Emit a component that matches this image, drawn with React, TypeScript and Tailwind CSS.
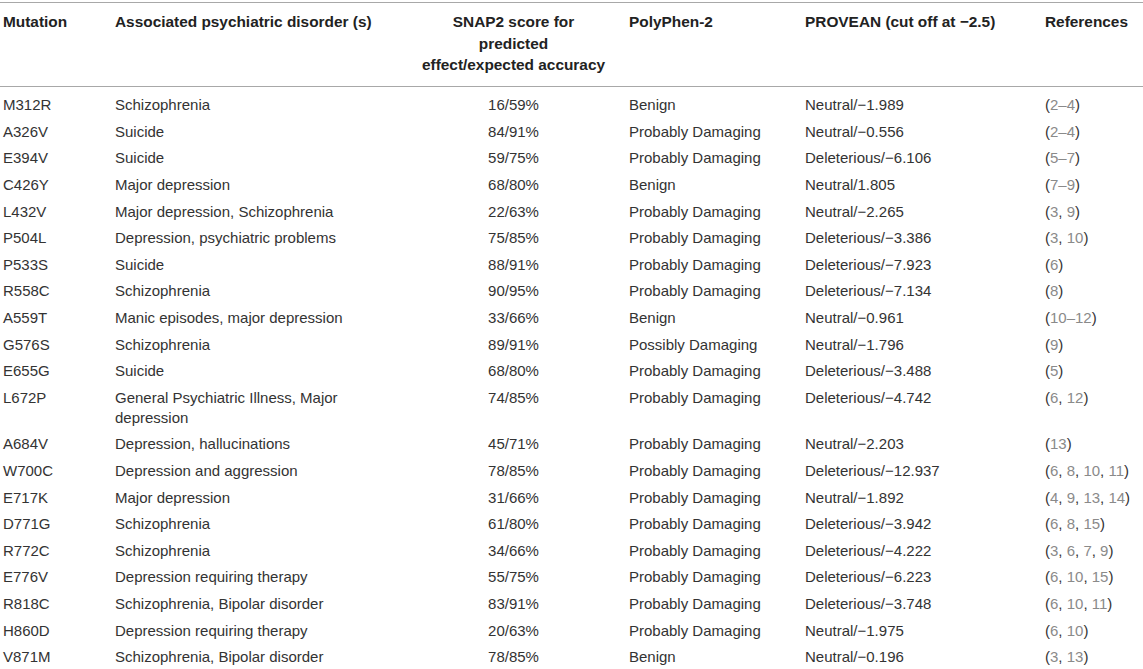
import React from 'react'

type Row = {
  mut: string
  disorder: string
  snap: string
  poly: string
  provean: string
  refs: string[]
}

const rows: Row[] = [
  { mut: 'M312R', disorder: 'Schizophrenia', snap: '16/59%', poly: 'Benign', provean: 'Neutral/−1.989', refs: ['2–4'] },
  { mut: 'A326V', disorder: 'Suicide', snap: '84/91%', poly: 'Probably Damaging', provean: 'Neutral/−0.556', refs: ['2–4'] },
  { mut: 'E394V', disorder: 'Suicide', snap: '59/75%', poly: 'Probably Damaging', provean: 'Deleterious/−6.106', refs: ['5–7'] },
  { mut: 'C426Y', disorder: 'Major depression', snap: '68/80%', poly: 'Benign', provean: 'Neutral/1.805', refs: ['7–9'] },
  { mut: 'L432V', disorder: 'Major depression, Schizophrenia', snap: '22/63%', poly: 'Probably Damaging', provean: 'Neutral/−2.265', refs: ['3', '9'] },
  { mut: 'P504L', disorder: 'Depression, psychiatric problems', snap: '75/85%', poly: 'Probably Damaging', provean: 'Deleterious/−3.386', refs: ['3', '10'] },
  { mut: 'P533S', disorder: 'Suicide', snap: '88/91%', poly: 'Probably Damaging', provean: 'Deleterious/−7.923', refs: ['6'] },
  { mut: 'R558C', disorder: 'Schizophrenia', snap: '90/95%', poly: 'Probably Damaging', provean: 'Deleterious/−7.134', refs: ['8'] },
  { mut: 'A559T', disorder: 'Manic episodes, major depression', snap: '33/66%', poly: 'Benign', provean: 'Neutral/−0.961', refs: ['10–12'] },
  { mut: 'G576S', disorder: 'Schizophrenia', snap: '89/91%', poly: 'Possibly Damaging', provean: 'Neutral/−1.796', refs: ['9'] },
  { mut: 'E655G', disorder: 'Suicide', snap: '68/80%', poly: 'Probably Damaging', provean: 'Deleterious/−3.488', refs: ['5'] },
  { mut: 'L672P', disorder: 'General Psychiatric Illness, Major depression', snap: '74/85%', poly: 'Probably Damaging', provean: 'Deleterious/−4.742', refs: ['6', '12'] },
  { mut: 'A684V', disorder: 'Depression, hallucinations', snap: '45/71%', poly: 'Probably Damaging', provean: 'Neutral/−2.203', refs: ['13'] },
  { mut: 'W700C', disorder: 'Depression and aggression', snap: '78/85%', poly: 'Probably Damaging', provean: 'Deleterious/−12.937', refs: ['6', '8', '10', '11'] },
  { mut: 'E717K', disorder: 'Major depression', snap: '31/66%', poly: 'Probably Damaging', provean: 'Neutral/−1.892', refs: ['4', '9', '13', '14'] },
  { mut: 'D771G', disorder: 'Schizophrenia', snap: '61/80%', poly: 'Probably Damaging', provean: 'Deleterious/−3.942', refs: ['6', '8', '15'] },
  { mut: 'R772C', disorder: 'Schizophrenia', snap: '34/66%', poly: 'Probably Damaging', provean: 'Deleterious/−4.222', refs: ['3', '6', '7', '9'] },
  { mut: 'E776V', disorder: 'Depression requiring therapy', snap: '55/75%', poly: 'Probably Damaging', provean: 'Deleterious/−6.223', refs: ['6', '10', '15'] },
  { mut: 'R818C', disorder: 'Schizophrenia, Bipolar disorder', snap: '83/91%', poly: 'Probably Damaging', provean: 'Deleterious/−3.748', refs: ['6', '10', '11'] },
  { mut: 'H860D', disorder: 'Depression requiring therapy', snap: '20/63%', poly: 'Probably Damaging', provean: 'Neutral/−1.975', refs: ['6', '10'] },
  { mut: 'V871M', disorder: 'Schizophrenia, Bipolar disorder', snap: '78/85%', poly: 'Benign', provean: 'Neutral/−0.196', refs: ['3', '13'] },
]

function Refs({ refs }: { refs: string[] }) {
  return (
    <>
      (
      {refs.map((r, i) => (
        <React.Fragment key={i}>
          {i > 0 && ', '}
          <span className="text-[#8a8a8a]">{r}</span>
        </React.Fragment>
      ))}
      )
    </>
  )
}

export default function App() {
  const th = 'font-bold text-[15.4px] text-[#222] align-top pt-[8px] pb-[10px] leading-[21.5px]'
  const td = 'align-top py-[3.3px] leading-[20px]'

  return (
    <div className="bg-white w-[1143px] h-[669px] overflow-hidden pt-[2px]" style={{ fontFamily: '"Liberation Sans", Arial, sans-serif' }}>
      <table className="table-fixed border-collapse w-[1143px] text-[15px] text-[#333]">
        <colgroup>
          <col className="w-[112px]" />
          <col className="w-[289px]" />
          <col className="w-[225px]" />
          <col className="w-[176px]" />
          <col className="w-[240px]" />
          <col className="w-[101px]" />
        </colgroup>
        <thead>
          <tr className="border-t border-b border-[#a8a8a8]">
            <th className={`${th} text-left pl-[3px]`}>Mutation</th>
            <th className={`${th} text-left pl-[3px] whitespace-nowrap`}>Associated psychiatric disorder (s)</th>
            <th className={`${th} text-center`}>
              SNAP2 score for
              <br />
              predicted
              <br />
              effect/expected accuracy
            </th>
            <th className={`${th} text-left pl-[3px]`}>PolyPhen-2</th>
            <th className={`${th} text-left pl-[3px]`}>PROVEAN (cut off at −2.5)</th>
            <th className={`${th} text-left pl-[3px]`}>References</th>
          </tr>
        </thead>
        <tbody>
          <tr>
            <td colSpan={6} className="h-[6px] p-0" />
          </tr>
          {rows.map((r) => (
            <tr key={r.mut}>
              <td className={`${td} pl-[3px]`}>{r.mut}</td>
              <td className={`${td} pl-[3px] pr-[36px]`}>{r.disorder}</td>
              <td className={`${td} text-center`}>{r.snap}</td>
              <td className={`${td} pl-[3px]`}>{r.poly}</td>
              <td className={`${td} pl-[3px]`}>{r.provean}</td>
              <td className={`${td} pl-[3px] whitespace-nowrap`}>
                <Refs refs={r.refs} />
              </td>
            </tr>
          ))}
        </tbody>
      </table>
    </div>
  )
}
